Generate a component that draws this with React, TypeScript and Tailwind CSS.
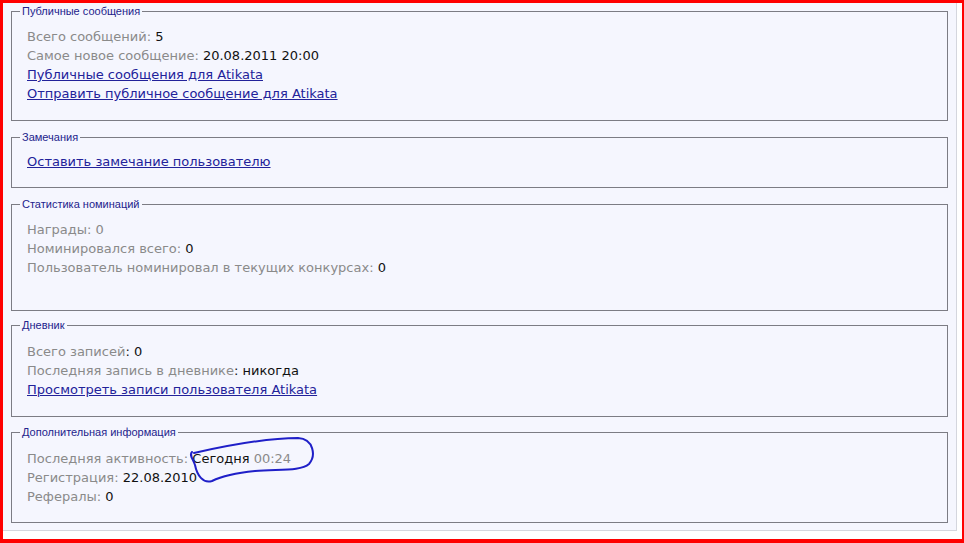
import React from "react";

const font = { fontFamily: '"DejaVu Sans", Verdana, sans-serif' };

function Box({
  title,
  children,
  className = "",
  bodyClass = "pt-[10px] pb-[16px]",
}: {
  title: string;
  children: React.ReactNode;
  className?: string;
  bodyClass?: string;
}) {
  return (
    <fieldset className={`border border-[#7c7c84] bg-[#f5f6fe] px-0 pb-0 pt-0 ${className}`}>
      <legend
        className="ml-[8px] px-[2px] text-[11px] leading-[12px] text-[#23238c]"
        style={{ fontFamily: '"Liberation Sans", Tahoma, Arial, sans-serif' }}
      >
        {title}
      </legend>
      <div className={`pl-[15px] text-[13px] leading-[19px] ${bodyClass}`} style={font}>
        {children}
      </div>
    </fieldset>
  );
}

const G = ({ children }: { children: React.ReactNode }) => (
  <span className="text-[#8a8a8a]">{children}</span>
);
const B = ({ children }: { children: React.ReactNode }) => (
  <span className="text-[#111111]">{children}</span>
);
const L = ({ children }: { children: React.ReactNode }) => (
  <div>
    <a href="#" className="text-[#22229a] underline">
      {children}
    </a>
  </div>
);

export default function App() {
  return (
    <div className="relative h-[543px] w-[964px] overflow-hidden border-b-[4px] border-l-[3px] border-r-[2px] border-t-[3px] border-[#ff0000] bg-white">
      <div className="h-[528px] w-[954px] border-b border-r border-[#d4d6de] bg-[#f5f6fe] pl-[8px] pr-[8px]">
        <div className="flex flex-col">
          <Box title="Публичные сообщения" className="mt-[2px]" bodyClass="pt-[10px] pb-[17px]">
            <div>
              <G>Всего сообщений:</G> <B>5</B>
            </div>
            <div>
              <G>Самое новое сообщение:</G> <B>20.08.2011 20:00</B>
            </div>
            <L>Публичные сообщения для Atikata</L>
            <L>Отправить публичное сообщение для Atikata</L>
          </Box>
          <Box title="Замечания" className="mt-[10px]" bodyClass="pt-[9px] pb-[16px]">
            <L>Оставить замечание пользователю</L>
          </Box>
          <Box title="Статистика номинаций" className="mt-[10px]" bodyClass="pt-[10px] pb-[33px]">
            <div>
              <G>Награды: 0</G>
            </div>
            <div>
              <G>Номинировался всего:</G> <B>0</B>
            </div>
            <div>
              <G>Пользователь номинировал в текущих конкурсах:</G> <B>0</B>
            </div>
          </Box>
          <Box title="Дневник" className="mt-[8px]" bodyClass="pt-[11px] pb-[17px]">
            <div>
              <G>Всего записей</G>
              <B>: 0</B>
            </div>
            <div>
              <G>Последняя запись в дневнике</G>
              <B>: никогда</B>
            </div>
            <L>Просмотреть записи пользователя Atikata</L>
          </Box>
          <Box title="Дополнительная информация" className="mt-[9px]" bodyClass="pt-[11px] pb-[16px]">
            <div>
              <G>Последняя активность:</G> <B>Сегодня</B> <G>00:24</G>
            </div>
            <div>
              <G>Регистрация:</G> <B>22.08.2010</B>
            </div>
            <div>
              <G>Рефералы:</G> <B>0</B>
            </div>
          </Box>
        </div>
      </div>
      <svg
        className="pointer-events-none absolute left-[-3px] top-[-3px]"
        width="964"
        height="543"
        viewBox="0 0 964 543"
      >
        <path
          d="M 194 453 C 225 446, 270 438, 298 438 C 314 439, 316 456, 309 464 C 301 471, 280 469, 255 471 C 235 473, 222 476, 212 481 C 203 484, 197 475, 195 465 C 193 459, 189 455, 192 452"
          fill="none"
          stroke="#1f1fc8"
          strokeWidth="2"
          strokeLinecap="round"
        />
      </svg>
    </div>
  );
}
